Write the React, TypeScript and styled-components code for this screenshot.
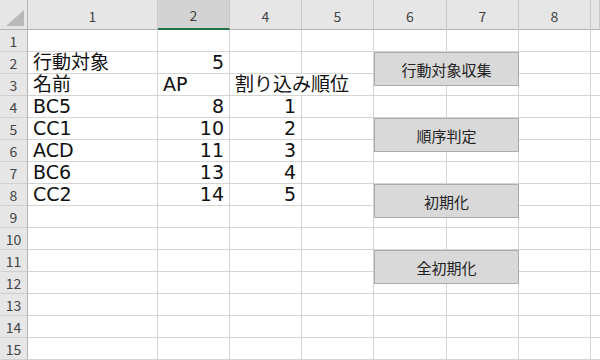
import React from "react";
import styled, { createGlobalStyle } from "styled-components";

const GlobalStyle = createGlobalStyle`
  body {
    margin: 0;
    background: #ffffff;
    font-family: "Noto Sans CJK JP", "Noto Sans", sans-serif;
  }
`;

interface Column {
  label: string;
  width: number;
  selected?: boolean;
}

interface CellData {
  text: string;
  align?: "left" | "right";
  span?: number;
}

const Columns: Column[] = [
  { label: "1", width: 130 },
  { label: "2", width: 72, selected: true },
  { label: "4", width: 72 },
  { label: "5", width: 72 },
  { label: "6", width: 73 },
  { label: "7", width: 72 },
  { label: "8", width: 72 },
  { label: "", width: 9 },
];

const ROW_COUNT = 15;
const ROW_HEIGHT = 22;
const HEADER_HEIGHT = 30;

const sheetData: Record<number, Record<number, CellData>> = {
  2: { 0: { text: "行動対象" }, 1: { text: "5", align: "right" } },
  3: {
    0: { text: "名前" },
    1: { text: "AP" },
    2: { text: "割り込み順位", span: 2 },
  },
  4: { 0: { text: "BC5" }, 1: { text: "8", align: "right" }, 2: { text: "1", align: "right" } },
  5: { 0: { text: "CC1" }, 1: { text: "10", align: "right" }, 2: { text: "2", align: "right" } },
  6: { 0: { text: "ACD" }, 1: { text: "11", align: "right" }, 2: { text: "3", align: "right" } },
  7: { 0: { text: "BC6" }, 1: { text: "13", align: "right" }, 2: { text: "4", align: "right" } },
  8: { 0: { text: "CC2" }, 1: { text: "14", align: "right" }, 2: { text: "5", align: "right" } },
};

const buttons = [
  { label: "行動対象収集", row: 2 },
  { label: "順序判定", row: 5 },
  { label: "初期化", row: 8 },
  { label: "全初期化", row: 11 },
];

const Sheet = styled.div`
  position: relative;
  width: 600px;
  height: 360px;
  overflow: hidden;
`;

const Grid = styled.div<{ $cols: string }>`
  display: grid;
  grid-template-columns: 28px ${(p) => p.$cols};
  grid-template-rows: ${HEADER_HEIGHT}px repeat(${ROW_COUNT}, ${ROW_HEIGHT}px);
`;

const Corner = styled.div`
  position: relative;
  background: #e6e6e6;
  border-right: 1px solid #b4b4b4;
  border-bottom: 1px solid #b4b4b4;
  box-sizing: border-box;

  &::after {
    content: "";
    position: absolute;
    right: 3px;
    bottom: 3px;
    width: 0;
    height: 0;
    border-left: 18px solid transparent;
    border-bottom: 16px solid #b9b9b9;
  }
`;

const ColHeader = styled.div<{ $selected?: boolean }>`
  display: flex;
  align-items: center;
  justify-content: center;
  box-sizing: border-box;
  background: ${(p) => (p.$selected ? "#d3d3d3" : "#e6e6e6")};
  border-right: 1px solid #c8c8c8;
  border-bottom: ${(p) => (p.$selected ? "2px solid #217346" : "1px solid #b4b4b4")};
  color: #444444;
  font-size: 14px;
  padding-top: 2px;
`;

const RowHeader = styled.div`
  display: flex;
  align-items: center;
  justify-content: center;
  box-sizing: border-box;
  background: #e6e6e6;
  border-right: 1px solid #b4b4b4;
  border-bottom: 1px solid #cfcfcf;
  color: #444444;
  font-size: 14px;
`;

const Cell = styled.div<{ $align: "left" | "right"; $span: number }>`
  grid-column: span ${(p) => p.$span};
  display: flex;
  align-items: flex-end;
  justify-content: ${(p) => (p.$align === "right" ? "flex-end" : "flex-start")};
  box-sizing: border-box;
  border-right: 1px solid #d4d4d4;
  border-bottom: 1px solid #d4d4d4;
  padding: 0 5px 0 5px;
  white-space: nowrap;
  color: #111111;
  font-family: "DejaVu Sans", "Noto Sans CJK JP", sans-serif;
  font-size: 19px;
  line-height: 22px;
`;

const ShapeButton = styled.div<{ $top: number }>`
  position: absolute;
  left: 374px;
  top: ${(p) => p.$top}px;
  width: 145px;
  height: 34px;
  box-sizing: border-box;
  background: #d9d9d9;
  border: 1px solid #ababab;
  display: flex;
  align-items: center;
  justify-content: center;
  color: #222222;
  font-size: 15px;
`;

const renderRow = (row: number) => {
  const data = sheetData[row] || {};
  const cells: React.ReactNode[] = [];
  let col = 0;
  while (col < Columns.length) {
    const cell = data[col];
    const span = cell?.span ?? 1;
    cells.push(
      <Cell key={`${row}-${col}`} $align={cell?.align ?? "left"} $span={span}>
        {cell?.text}
      </Cell>
    );
    col += span;
  }
  return cells;
};

const App = () => {
  const rows = Array.from({ length: ROW_COUNT }, (_, i) => i + 1);

  return (
    <>
      <GlobalStyle />
      <Sheet>
        <Grid $cols={Columns.map((c) => `${c.width}px`).join(" ")}>
          <Corner />
          {Columns.map((column, i) => (
            <ColHeader key={i} $selected={column.selected}>
              {column.label}
            </ColHeader>
          ))}
          {rows.map((row) => (
            <React.Fragment key={row}>
              <RowHeader>{row}</RowHeader>
              {renderRow(row)}
            </React.Fragment>
          ))}
        </Grid>
        {buttons.map((b) => (
          <ShapeButton key={b.label} $top={HEADER_HEIGHT + (b.row - 1) * ROW_HEIGHT}>
            {b.label}
          </ShapeButton>
        ))}
      </Sheet>
    </>
  );
};

export default App;
